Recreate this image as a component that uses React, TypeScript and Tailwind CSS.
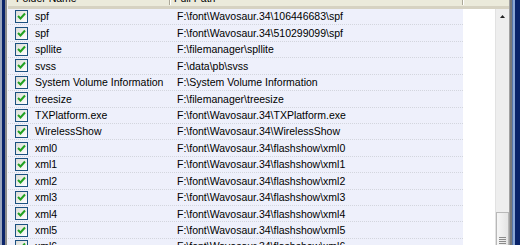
import React from 'react';

const rows: { name: string; path: string }[] = [
  { name: 'spf', path: 'F:\\font\\Wavosaur.34\\106446683\\spf' },
  { name: 'spf', path: 'F:\\font\\Wavosaur.34\\510299099\\spf' },
  { name: 'spllite', path: 'F:\\filemanager\\spllite' },
  { name: 'svss', path: 'F:\\data\\pb\\svss' },
  { name: 'System Volume Information', path: 'F:\\System Volume Information' },
  { name: 'treesize', path: 'F:\\filemanager\\treesize' },
  { name: 'TXPlatform.exe', path: 'F:\\font\\Wavosaur.34\\TXPlatform.exe' },
  { name: 'WirelessShow', path: 'F:\\font\\Wavosaur.34\\WirelessShow' },
  { name: 'xml0', path: 'F:\\font\\Wavosaur.34\\flashshow\\xml0' },
  { name: 'xml1', path: 'F:\\font\\Wavosaur.34\\flashshow\\xml1' },
  { name: 'xml2', path: 'F:\\font\\Wavosaur.34\\flashshow\\xml2' },
  { name: 'xml3', path: 'F:\\font\\Wavosaur.34\\flashshow\\xml3' },
  { name: 'xml4', path: 'F:\\font\\Wavosaur.34\\flashshow\\xml4' },
  { name: 'xml5', path: 'F:\\font\\Wavosaur.34\\flashshow\\xml5' },
  { name: 'xml6', path: 'F:\\font\\Wavosaur.34\\flashshow\\xml6' },
];

const Check: React.FC = () => (
  <div className="flex h-[13px] w-[13px] shrink-0 items-center justify-center border border-[#1c5180] bg-gradient-to-br from-[#dcdcd7] to-white">
    <svg width="9" height="9" viewBox="0 0 9 9">
      <path d="M1 4 L3.5 6.5 L8 1.5" fill="none" stroke="#21a121" strokeWidth="2" />
    </svg>
  </div>
);

const App: React.FC = () => {
  return (
    <div className="flex h-[245px] w-[520px] overflow-hidden bg-[#d4d0c8] font-['Liberation_Sans',Arial,sans-serif] text-[10.5px] leading-none text-black">
      {/* left window frame */}
      <div className="w-[2px] bg-[#9aa6bd]" />
      <div className="w-[3px] bg-[#0a246a]" />
      <div className="w-[2px] bg-[#8d8d8d]" />
      <div className="w-[1px] bg-[#f2f2f2]" />

      <div className="flex min-w-0 flex-1 flex-col bg-white">
        <div className="-mt-[9px] flex h-[18px] shrink-0 items-center border-b-[3px] border-[#d6d2c2] bg-[#ebeadb]">
          <div className="flex h-full w-[161px] items-center pl-[8px]">Folder Name</div>
          <div className="h-[12px] w-[2px] border-l border-r border-l-[#aca899] border-r-white" />
          <div className="flex h-full w-[291px] items-center pl-[3px]">Full Path</div>
          <div className="h-[12px] w-[2px] border-l border-r border-l-[#aca899] border-r-white" />
        </div>

        <div className="flex min-h-0 flex-1">
          {/* list rows */}
          <div className="min-w-0 flex-1">
            {rows.map((r, i) => (
              <div
                key={i}
                className="flex h-[16.43px] w-[455px] items-center border-b border-dotted border-[#d3d6de] bg-[#eef0fb]"
              >
                <div className="flex w-[161px] items-center pl-[7px]">
                  <Check />
                  <span className="ml-[7px] whitespace-nowrap">{r.name}</span>
                </div>
                <span className="whitespace-nowrap pl-[8px]">{r.path}</span>
              </div>
            ))}
          </div>

          {/* vertical scrollbar */}
          <div className="flex w-[14px] flex-col border-l border-[#e2e2e2] bg-[#eeeeee]">
            <div className="flex h-[14px] items-center justify-center">
              <svg width="5" height="3" viewBox="0 0 5 3">
                <path d="M2.5 0 L5 3 L0 3 Z" fill="#222" />
              </svg>
            </div>
            <div className="flex-1" />
            <div className="flex h-[33px] flex-col items-center border border-b-0 border-[#b8b8b8] bg-gradient-to-r from-[#f6f6f6] to-[#e4e4e4] pt-[24px]">
              <div className="h-[1px] w-[7px] bg-[#8a8a8a]" />
              <div className="mt-[1px] h-[1px] w-[7px] bg-[#8a8a8a]" />
              <div className="mt-[1px] h-[1px] w-[7px] bg-[#8a8a8a]" />
              <div className="mt-[1px] h-[1px] w-[7px] bg-[#8a8a8a]" />
            </div>
          </div>
        </div>
      </div>

      {/* right window frame */}
      <div className="w-[1px] bg-[#a0a0a0]" />
      <div className="w-[2px] bg-[#7a7a7a]" />
      <div className="w-[1px] bg-[#5a78a8]" />
      <div className="w-[2px] bg-[#8aa6d4]" />
      <div className="w-[5px] bg-[#0a246a]" />
    </div>
  );
};

export default App;
